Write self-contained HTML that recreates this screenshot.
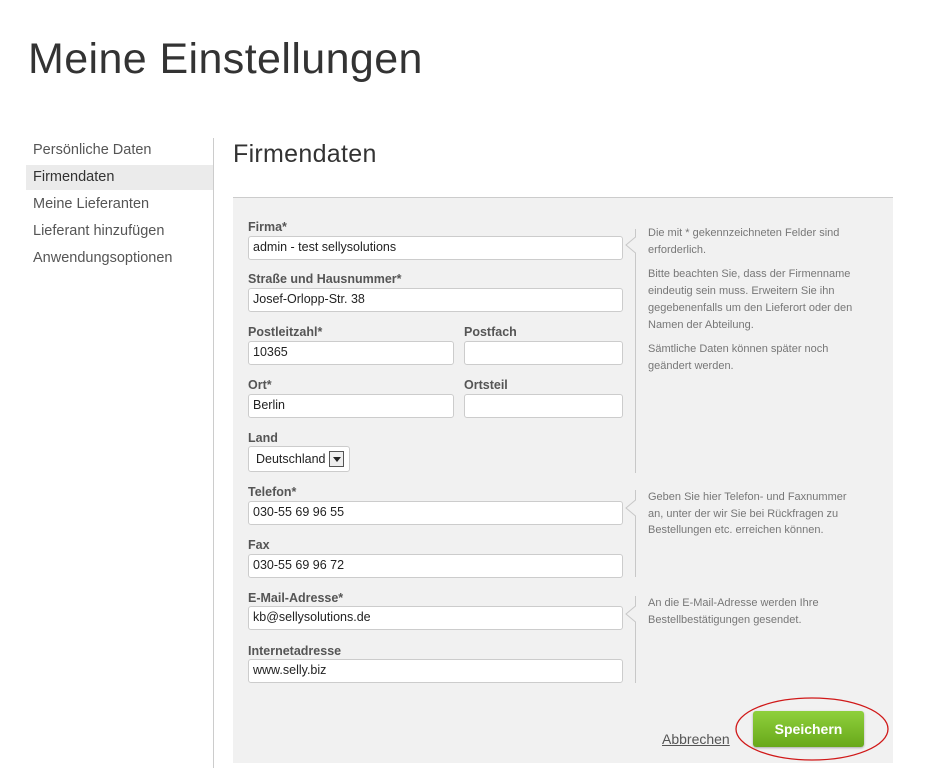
<!DOCTYPE html>
<html><head><meta charset="utf-8"><style>
body{margin:0;width:936px;height:768px;background:#fff;font-family:"Liberation Sans","DejaVu Sans",sans-serif;position:relative;overflow:hidden;color:#333}
.a{position:absolute;white-space:nowrap}
h1{position:absolute;left:28px;top:35px;margin:0;font-weight:normal;font-size:43px;color:#333;letter-spacing:0.4px}
.nav{left:33px;font-size:14.5px;color:#555}
.lbl{font-weight:bold;font-size:12.5px;color:#555}
.in{position:absolute;background:#fff;border:1px solid #ccc;border-radius:3px;box-sizing:border-box;height:24px;font-size:12.5px;color:#222;padding:3px 0 0 4px}
.help{left:648px;font-size:11px;line-height:16.7px;color:#777;white-space:normal;width:215px}
.help p{margin:0 0 8px 0}
</style></head><body>
<h1>Meine Einstellungen</h1>
<div class="a" style="left:26px;top:165px;width:187px;height:25px;background:#ebebeb"></div>
<div class="a" style="left:213px;top:138px;width:1px;height:630px;background:#ccc"></div>
<div class="a nav" style="top:142px">Persönliche Daten</div>
<div class="a nav" style="top:169px;color:#333">Firmendaten</div>
<div class="a nav" style="top:196px">Meine Lieferanten</div>
<div class="a nav" style="top:223px">Lieferant hinzufügen</div>
<div class="a nav" style="top:250px">Anwendungsoptionen</div>
<div class="a" style="left:233px;top:140px;font-size:25px;color:#333;letter-spacing:0.3px">Firmendaten</div>
<div class="a" style="left:233px;top:197px;width:660px;height:565px;background:#f1f1f1;border-top:1px solid #ccc"></div>

<div class="a lbl" style="left:248px;top:220px">Firma*</div>
<div class="in" style="left:248px;top:236px;width:375px">admin - test sellysolutions</div>
<div class="a lbl" style="left:248px;top:272px">Straße und Hausnummer*</div>
<div class="in" style="left:248px;top:288px;width:375px">Josef-Orlopp-Str. 38</div>
<div class="a lbl" style="left:248px;top:325px">Postleitzahl*</div>
<div class="a lbl" style="left:464px;top:325px">Postfach</div>
<div class="in" style="left:248px;top:341px;width:206px">10365</div>
<div class="in" style="left:464px;top:341px;width:159px"></div>
<div class="a lbl" style="left:248px;top:378px">Ort*</div>
<div class="a lbl" style="left:464px;top:378px">Ortsteil</div>
<div class="in" style="left:248px;top:394px;width:206px">Berlin</div>
<div class="in" style="left:464px;top:394px;width:159px"></div>
<div class="a lbl" style="left:248px;top:431px">Land</div>
<div class="in" style="left:248px;top:446px;width:102px;height:26px;padding:5px 0 0 7px">Deutschland</div>
<div class="a" style="left:329px;top:451px;width:15px;height:16px;border:1px solid #555;background:#eee;box-sizing:border-box"><div style="position:absolute;left:3px;top:5px;border-left:4px solid transparent;border-right:4px solid transparent;border-top:5px solid #222"></div></div>

<div class="a lbl" style="left:248px;top:485px">Telefon*</div>
<div class="in" style="left:248px;top:501px;width:375px">030-55 69 96 55</div>
<div class="a lbl" style="left:248px;top:538px">Fax</div>
<div class="in" style="left:248px;top:554px;width:375px">030-55 69 96 72</div>
<div class="a lbl" style="left:248px;top:591px">E-Mail-Adresse*</div>
<div class="in" style="left:248px;top:606px;width:375px">kb@sellysolutions.de</div>
<div class="a lbl" style="left:248px;top:644px">Internetadresse</div>
<div class="in" style="left:248px;top:659px;width:375px">www.selly.biz</div>

<svg class="a" style="left:620px;top:220px" width="30" height="470">
<g fill="none" stroke="#c8c8c8" stroke-width="1">
<path d="M15.5 9V17L6 25L15.5 33V253"/>
<path d="M15.5 270V280L6 288L15.5 296V357"/>
<path d="M15.5 376V386L6 394L15.5 402V463"/>
</g></svg>

<div class="a help" style="top:225px"><p>Die mit * gekennzeichneten Felder sind erforderlich.</p><p>Bitte beachten Sie, dass der Firmenname eindeutig sein muss. Erweitern Sie ihn gegebenenfalls um den Lieferort oder den Namen der Abteilung.</p><p>Sämtliche Daten können später noch geändert werden.</p></div>
<div class="a help" style="top:489px">Geben Sie hier Telefon- und Faxnummer an, unter der wir Sie bei Rückfragen zu Bestellungen etc. erreichen können.</div>
<div class="a help" style="top:595px">An die E-Mail-Adresse werden Ihre Bestellbestätigungen gesendet.</div>

<div class="a" style="left:662px;top:731px;font-size:14px;color:#555;text-decoration:underline">Abbrechen</div>
<div class="a" style="left:753px;top:711px;width:111px;height:36px;border-radius:3px;background:linear-gradient(#8fd03c,#68a81a);box-shadow:0 1px 2px rgba(0,0,0,.3);color:#fff;font-weight:bold;font-size:14px;text-align:center;line-height:36px">Speichern</div>
<svg class="a" style="left:730px;top:692px" width="170" height="76"><ellipse cx="82" cy="37" rx="76" ry="31" fill="none" stroke="#d01818" stroke-width="1.3"/></svg>
</body></html>
